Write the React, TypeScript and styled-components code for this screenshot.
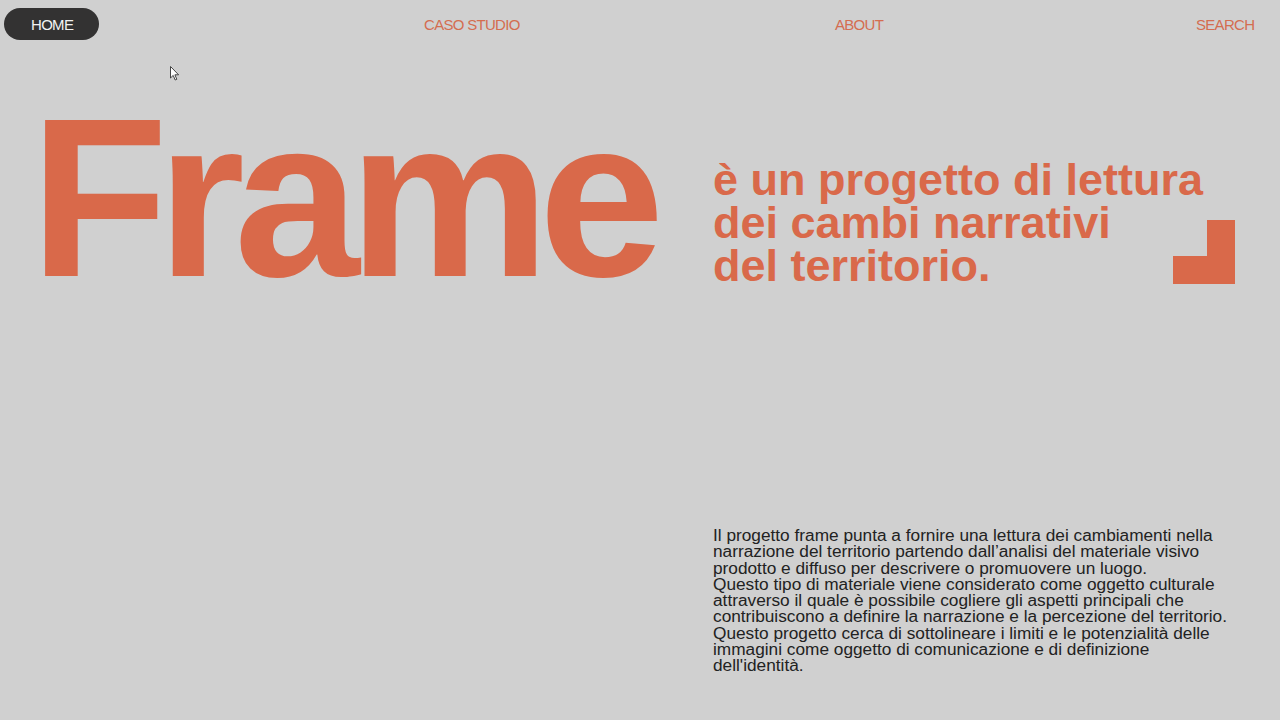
import React from "react";
import styled, { createGlobalStyle } from "styled-components";

const ORANGE = "#d9694a";

const Global = createGlobalStyle`
  html, body { margin: 0; padding: 0; background: #d0d0d0; }
  body { font-family: "Liberation Sans", Arial, sans-serif; }
`;

const Page = styled.div`
  position: relative;
  width: 1280px;
  height: 720px;
  overflow: hidden;
  background: #d0d0d0;
  display: flex;
  flex-direction: column;
`;

const Nav = styled.nav`
  display: grid;
  grid-template-columns: 420px 411px 361px 1fr;
  align-items: center;
  padding: 8px 0 0 4px;
  height: 32px;
`;

const NavItem = styled.a<{ $active?: boolean }>`
  justify-self: start;
  display: inline-flex;
  align-items: center;
  height: 32px;
  font-size: 15px;
  letter-spacing: -0.7px;
  text-decoration: none;
  color: ${(p) => (p.$active ? "#f2f2f2" : "#d46d50")};
  background: ${(p) => (p.$active ? "#333232" : "transparent")};
  border-radius: 16px;
  padding: ${(p) => (p.$active ? "0 26px 0 27px" : "0")};
`;

const Hero = styled.section`
  display: grid;
  grid-template-columns: 713px minmax(0, 1fr);
  margin-top: 42px;
`;

const Title = styled.h1`
  margin: 0 0 0 30px;
  font-size: 226px;
  line-height: 232px;
  font-weight: 700;
  letter-spacing: -11px;
  white-space: nowrap;
  color: ${ORANGE};
`;

const Lead = styled.div`
  align-self: start;
  display: grid;
  padding: 76px 45px 0 0;
`;

const Subtitle = styled.h2`
  grid-area: 1 / 1;
  margin: 0;
  font-size: 45px;
  line-height: 43px;
  font-weight: 700;
  letter-spacing: 0;
  white-space: nowrap;
  color: ${ORANGE};
`;

const Corner = styled.svg`
  grid-area: 1 / 1;
  justify-self: end;
  align-self: end;
  display: block;
  width: 62px;
  height: 64px;
  margin-bottom: 3px;
`;

const Body = styled.section`
  display: grid;
  grid-template-columns: 713px 1fr;
  margin-top: 213px;
`;

const Paragraph = styled.p`
  grid-column: 2;
  margin: 0;
  font-size: 17.25px;
  line-height: 16.25px;
  color: #222;
  white-space: nowrap;
`;

const Cursor = styled.svg`
  position: absolute;
  left: 170px;
  top: 66px;
  width: 10px;
  height: 15px;
`;

export default function App() {
  return (
    <>
      <Global />
      <Page>
        <Nav>
          <NavItem $active>HOME</NavItem>
          <NavItem>CASO STUDIO</NavItem>
          <NavItem>ABOUT</NavItem>
          <NavItem>SEARCH</NavItem>
        </Nav>
        <Hero>
          <Title>Frame</Title>
          <Lead>
            <Subtitle>
              è un progetto di lettura
              <br />
              dei cambi narrativi
              <br />
              del territorio.
            </Subtitle>
            <Corner viewBox="0 0 62 64">
              <polygon points="34,0 62,0 62,64 0,64 0,36 34,36" fill={ORANGE} />
            </Corner>
          </Lead>
        </Hero>
        <Body>
          <Paragraph>
            Il progetto frame punta a fornire una lettura dei cambiamenti nella
            <br />
            narrazione del territorio partendo dall’analisi del materiale visivo
            <br />
            prodotto e diffuso per descrivere o promuovere un luogo.
            <br />
            Questo tipo di materiale viene considerato come oggetto culturale
            <br />
            attraverso il quale è possibile cogliere gli aspetti principali che
            <br />
            contribuiscono a definire la narrazione e la percezione del territorio.
            <br />
            Questo progetto cerca di sottolineare i limiti e le potenzialità delle
            <br />
            immagini come oggetto di comunicazione e di definizione
            <br />
            dell'identità.
          </Paragraph>
        </Body>
        <Cursor viewBox="0 0 10 15">
          <path d="M0.5 0.5 L0.5 12 L3.2 9.4 L5.2 14 L6.8 13.3 L4.9 8.8 L8.6 8.8 Z" fill="#fff" stroke="#333" strokeWidth="0.9" />
        </Cursor>
      </Page>
    </>
  );
}
